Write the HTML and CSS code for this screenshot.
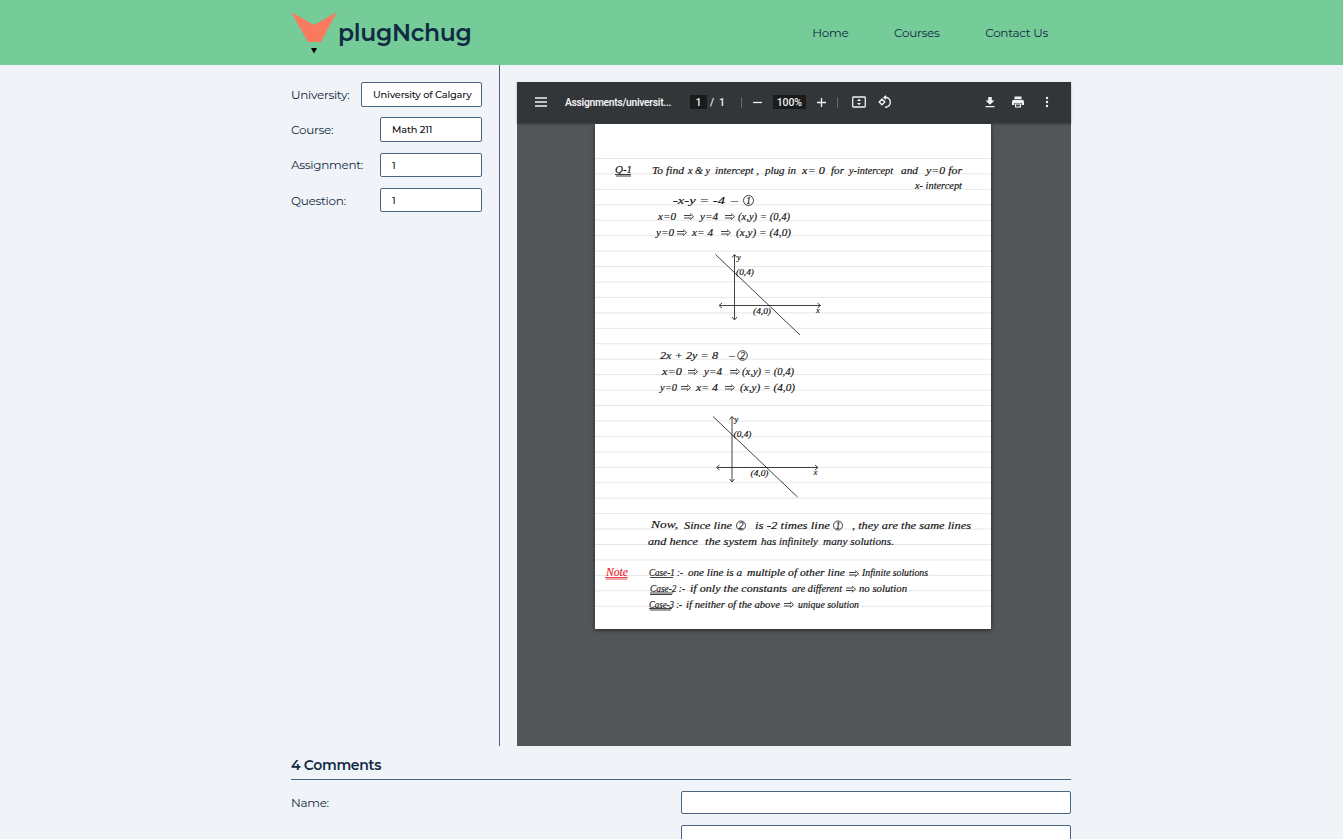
FILE: index.html
```html
<!DOCTYPE html>
<html lang="en">
<head>
<meta charset="utf-8">
<title>plugNchug</title>
<link rel="stylesheet" href="styles.css">
</head>
<body>
<header class="header">
  <div class="container header-inner">
    <a class="brand">
      <svg class="logo" viewBox="0 0 46 42"><path d="M0 0 23 13 46 0 30 30H17Z" fill="#fa7a5f"/><path d="M20 36h6l-3 5.500Z" fill="#000"/></svg>
      <span class="brand-name">plugNchug</span>
    </a>
    <nav class="nav"><a>Home</a><a>Courses</a><a>Contact Us</a></nav>
  </div>
</header>
<main class="container">
  <div class="main">
    <aside class="sidebar">
      <div class="field"><span class="label">University:</span><div class="box box-wide">University of Calgary</div></div>
      <div class="field"><span class="label">Course:</span><div class="box">Math 211</div></div>
      <div class="field"><span class="label">Assignment:</span><div class="box">1</div></div>
      <div class="field"><span class="label">Question:</span><div class="box">1</div></div>
    </aside>
    <section class="viewer">
      <div class="toolbar">
        <svg class="icon menu" viewBox="0 0 12 10"><path d="M0 1h12M0 5h12M0 9h12" stroke-width="1.500"/></svg>
        <span class="filename">Assignments/universit...</span>
        <span class="chip page-no">1</span><span class="slash">/</span><span class="total">1</span>
        <i class="divider"></i>
        <svg class="icon minus" viewBox="0 0 9 9"><path d="M0 4.500h9" stroke-width="1.300"/></svg>
        <span class="chip zoom">100%</span>
        <svg class="icon plus" viewBox="0 0 9 9"><path d="M0 4.500h9M4.500 0v9" stroke-width="1.300"/></svg>
        <i class="divider divider-two"></i>
        <svg class="icon fit" viewBox="0 0 14 12"><rect x=".7" y="1" width="12.600" height="10" rx=".8" stroke-width="1.300"/><path d="M7 2.700 9 5H5ZM7 9.300 9 7H5Z" fill="#f1f1f1" stroke="none"/></svg>
        <svg class="icon rotate" viewBox="0 0 14 14"><path d="M4 4 1.200 7 4 9.800 6.800 7ZM6 2.500A5 5 0 1 1 7 12.300" stroke-width="1.400"/><path d="M8 0v5L5 2.500Z" fill="#f1f1f1" stroke="none"/></svg>
        <span class="spacer"></span>
        <svg class="icon download" viewBox="0 0 10 12"><path d="M3.200 1h3.600v3.500H9.500L5 8.800.5 4.500h2.700ZM.5 10h9v1.300h-9Z" fill="#f1f1f1" stroke="none"/></svg>
        <svg class="icon print" viewBox="0 0 12 12"><path d="M2.500.5h7V3h-7ZM2 3.800h8a2 2 0 0 1 2 2V9H9.700V7H2.300v2H0V5.800a2 2 0 0 1 2-2ZM3 7.600h6v3.900H3Z" fill="#f1f1f1" stroke="none"/><path d="M4.100 8.600h3.800v1.800H4.100Z" fill="#323639" stroke="none"/></svg>
        <svg class="icon more" viewBox="0 0 4 12"><g fill="#f1f1f1" stroke="none"><circle cx="2" cy="2" r="1.200"/><circle cx="2" cy="6" r="1.200"/><circle cx="2" cy="10" r="1.200"/></g></svg>
      </div>
      <div class="canvas">
        <svg class="sheet" viewBox="595 124 396 505">
          <defs>
            <pattern id="rules" x="595" y="158" width="396" height="15.440" patternUnits="userSpaceOnUse"><path d="M0 .5h397" stroke="#e6e6e6" stroke-width="1"/></pattern>
            <g id="graph">
              <path d="M715.500 254.500 800 335M734.500 255v64M720 305.500h100" />
              <path d="m732 257.500 2.500-3 2.500 3M732 317l2.500 3 2.500-3M722 303l-3 2.500 3 2.500M817.500 303l3 2.500-3 2.500"/>
              <g class="ink small"><text x="737" y="260">y</text><text x="736" y="275" textLength="18" lengthAdjust="spacingAndGlyphs">(0,4)</text><text x="753" y="313.500" textLength="18" lengthAdjust="spacingAndGlyphs">(4,0)</text><text x="816" y="313">x</text></g>
            </g>
          </defs>
          <rect x="595" y="158" width="397" height="450" fill="url(#rules)"/>
          <g class="ink">
            <text x="615" y="173" textLength="17" lengthAdjust="spacingAndGlyphs">Q-1</text>
            <text x="652" y="174" textLength="32" lengthAdjust="spacingAndGlyphs">To find</text><text x="688" y="174" textLength="22" lengthAdjust="spacingAndGlyphs">x &amp; y</text><text x="715" y="174" textLength="44" lengthAdjust="spacingAndGlyphs">intercept ,</text><text x="765" y="174" textLength="31" lengthAdjust="spacingAndGlyphs">plug in</text><text x="802" y="174" textLength="23" lengthAdjust="spacingAndGlyphs">x= 0</text><text x="831" y="174" textLength="13" lengthAdjust="spacingAndGlyphs">for</text><text x="849" y="174" textLength="44" lengthAdjust="spacingAndGlyphs">y-intercept</text><text x="901" y="174" textLength="17" lengthAdjust="spacingAndGlyphs">and</text><text x="926" y="174" textLength="36" lengthAdjust="spacingAndGlyphs">y=0 for</text>
            <text x="915" y="189" textLength="47" lengthAdjust="spacingAndGlyphs">x- intercept</text>
            <text x="673" y="204" textLength="52" lengthAdjust="spacingAndGlyphs">-x-y = -4</text><text x="731" y="204" textLength="7" lengthAdjust="spacingAndGlyphs">–</text><text x="746" y="203.500">1</text>
            <text x="658" y="220" textLength="18" lengthAdjust="spacingAndGlyphs">x=0</text><text x="700" y="220" textLength="18" lengthAdjust="spacingAndGlyphs">y=4</text><text x="738" y="220" textLength="52" lengthAdjust="spacingAndGlyphs">(x,y) = (0,4)</text>
            <text x="656" y="236" textLength="18" lengthAdjust="spacingAndGlyphs">y=0</text><text x="692" y="236" textLength="21" lengthAdjust="spacingAndGlyphs">x= 4</text><text x="736" y="236" textLength="55" lengthAdjust="spacingAndGlyphs">(x,y) = (4,0)</text>
            <text x="660" y="359" textLength="58" lengthAdjust="spacingAndGlyphs">2x + 2y = 8</text><text x="729" y="359" textLength="6" lengthAdjust="spacingAndGlyphs">–</text><text x="740" y="359">2</text>
            <text x="662" y="375" textLength="20" lengthAdjust="spacingAndGlyphs">x=0</text><text x="704" y="375" textLength="18" lengthAdjust="spacingAndGlyphs">y=4</text><text x="742" y="375" textLength="52" lengthAdjust="spacingAndGlyphs">(x,y) = (0,4)</text>
            <text x="660" y="391" textLength="17" lengthAdjust="spacingAndGlyphs">y=0</text><text x="696" y="391" textLength="22" lengthAdjust="spacingAndGlyphs">x= 4</text><text x="740" y="391" textLength="55" lengthAdjust="spacingAndGlyphs">(x,y) = (4,0)</text>
            <text x="651" y="528" textLength="27" lengthAdjust="spacingAndGlyphs">Now,</text><text x="684" y="529" textLength="48" lengthAdjust="spacingAndGlyphs">Since line</text><text x="738.500" y="529">2</text><text x="755" y="529" textLength="75" lengthAdjust="spacingAndGlyphs">is -2 times line</text><text x="835.500" y="529">1</text><text x="852" y="529" textLength="119" lengthAdjust="spacingAndGlyphs">, they are the same lines</text>
            <text x="648" y="545" textLength="50" lengthAdjust="spacingAndGlyphs">and hence</text><text x="705" y="545" textLength="52" lengthAdjust="spacingAndGlyphs">the system</text><text x="761" y="545" textLength="57" lengthAdjust="spacingAndGlyphs">has infinitely</text><text x="823" y="545" textLength="71" lengthAdjust="spacingAndGlyphs">many solutions.</text>
            <text x="649" y="576" textLength="34" lengthAdjust="spacingAndGlyphs">Case-1 :-</text><text x="688" y="576" textLength="54" lengthAdjust="spacingAndGlyphs">one line is a</text><text x="747" y="576" textLength="98" lengthAdjust="spacingAndGlyphs">multiple of other line</text><text x="862" y="576" textLength="66" lengthAdjust="spacingAndGlyphs">Infinite solutions</text>
            <text x="650" y="592" textLength="35" lengthAdjust="spacingAndGlyphs">Case-2 :-</text><text x="690" y="592" textLength="97" lengthAdjust="spacingAndGlyphs">if only the constants</text><text x="792" y="592" textLength="50" lengthAdjust="spacingAndGlyphs">are different</text><text x="859" y="592" textLength="48" lengthAdjust="spacingAndGlyphs">no solution</text>
            <text x="649" y="607.500" textLength="33" lengthAdjust="spacingAndGlyphs">Case-3 :-</text><text x="686" y="607.500" textLength="94" lengthAdjust="spacingAndGlyphs">if neither of the above</text><text x="798" y="607.500" textLength="61" lengthAdjust="spacingAndGlyphs">unique solution</text>
            <text class="red" x="606" y="576" textLength="22" lengthAdjust="spacingAndGlyphs">Note</text>
          </g>
          <g class="stroke">
            <circle cx="748.500" cy="200.500" r="5"/><circle cx="742.500" cy="355.500" r="4.800"/><circle cx="741" cy="525.500" r="4.500"/><circle cx="838" cy="525.500" r="4.500"/>
            <path d="M615 174.500h16M616 176h15M650 577.500h23M650 593h23M650 594.500h22M649 608.500h23M650 610h21"/>
            <path class="red-line" d="M605 577.500h23M606 579h21"/>
            <path id="arrow" d="M684 215.500h7M684 218h7M690 213.500l3.500 3.200-3.500 3"/>
            <use href="#arrow" x="41"/><use href="#arrow" x="-7" y="16"/><use href="#arrow" x="37" y="16"/>
            <use href="#arrow" x="4" y="155"/><use href="#arrow" x="46" y="155"/><use href="#arrow" x="-3" y="171"/><use href="#arrow" x="41" y="171"/>
            <use href="#arrow" x="165" y="357"/><use href="#arrow" x="162" y="372.500"/><use href="#arrow" x="100" y="388"/>
            <use href="#graph"/><use href="#graph" x="-2.500" y="162"/>
          </g>
        </svg>
      </div>
    </section>
  </div>
  <section class="comments">
    <h2>4 Comments</h2>
    <div class="comment-row"><span class="label">Name:</span><div class="input"></div></div>
    <div class="comment-row"><span></span><div class="input"></div></div>
  </section>
</main>
</body>
</html>
```
FILE: styles.css
```css
* { box-sizing: border-box; }
body { margin: 0; height: 839px; overflow: hidden; background: #f0f4f8; color: #102a43; font-family: Montserrat, Inter, sans-serif; font-size: 12px; letter-spacing: -.3px; }
.container { width: 780px; margin-left: 291px; }
.header { height: 65px; background: #76cc99; }
.header-inner { display: flex; justify-content: space-between; height: 65px; }
.brand { display: flex; padding-top: 12px; }
.logo { width: 46px; height: 42px; }
.brand-name { margin-left: 1px; font-size: 23.500px; line-height: 42px; font-weight: 600; letter-spacing: -.3px; }
.nav { display: flex; align-items: center; padding-right: 23px; gap: 45.700px; }
.nav a { white-space: nowrap; }
.main { display: flex; height: 680.500px; }
.sidebar { width: 209px; border-right: 1px solid #486581; padding: 17px 17px 0 0; display: flex; flex-direction: column; gap: 10.800px; }
.field { height: 24.500px; display: flex; align-items: center; justify-content: space-between; }
.box { width: 102px; height: 24.500px; border: 1px solid #486581; border-radius: 2px; background: #fff; padding: 1px 0 0 11px; font-size: 9.800px; letter-spacing: -.16px; font-weight: 500; line-height: 22.500px; white-space: nowrap; color: #101018; }
.box-wide { width: 121px; }
.viewer { width: 554px; margin: 17px 0 0 17px; background: #525659; display: flex; flex-direction: column; }
.toolbar { height: 41px; background: #323639; display: flex; align-items: center; padding: 0 0 1px 18px; color: #f1f1f1; font: 500 10.500px Roboto, sans-serif; letter-spacing: -.15px; box-shadow: 0 1px 2px #0005; flex: none; }
.icon { flex: none; fill: none; stroke: #f1f1f1; }
.menu { width: 12px; height: 10px; }
.filename { width: 107px; margin-left: 18px; white-space: nowrap; font-size: 10.300px; font-weight: 600; letter-spacing: -.3px; }
.chip { background: #191b1c; height: 14px; line-height: 15px; text-align: center; }
.page-no { width: 17px; margin-left: 18px; }
.slash { margin-left: 3px; }
.total { margin-left: 5px; }
.divider { width: 1px; height: 11px; background: #66696c; margin-left: 16px; }
.minus { width: 9px; height: 9px; margin-left: 11px; }
.zoom { width: 33px; margin-left: 11px; }
.plus { width: 9px; height: 9px; margin-left: 11px; }
.divider-two { margin-left: 11px; }
.fit { width: 14px; height: 12px; margin-left: 14px; }
.rotate { width: 14px; height: 14px; margin-left: 12px; }
.spacer { flex: 1; }
.download { width: 10px; height: 12px; margin-right: 17.500px; }
.print { width: 12px; height: 12px; margin-right: 21px; }
.more { width: 4px; height: 12px; margin-right: 22px; }
.canvas { padding: 1px 0 0 78px; }
.sheet { display: block; width: 396px; height: 505px; background: #fff; box-shadow: 0 1px 4px #0009; }
.ink { font: italic 10px "Liberation Serif", serif; letter-spacing: 0; fill: #111; stroke: #111; stroke-width: .15px; }
.ink.small { font-size: 8.500px; }
.ink .red { fill: #e8202c; stroke: #e8202c; font-size: 12px; }
.stroke { fill: none; stroke: #111; stroke-width: .8; }
.red-line { stroke: #e8202c; }
.comments h2 { margin: 0; height: 34px; border-bottom: 1px solid #486581; font-size: 14px; line-height: 39px; font-weight: 600; letter-spacing: -.3px; }
.comment-row { display: flex; justify-content: space-between; align-items: center; height: 23px; margin-top: 11px; }
.input { width: 390px; height: 23px; background: #fff; border: 1px solid #486581; border-radius: 2px; }
```
